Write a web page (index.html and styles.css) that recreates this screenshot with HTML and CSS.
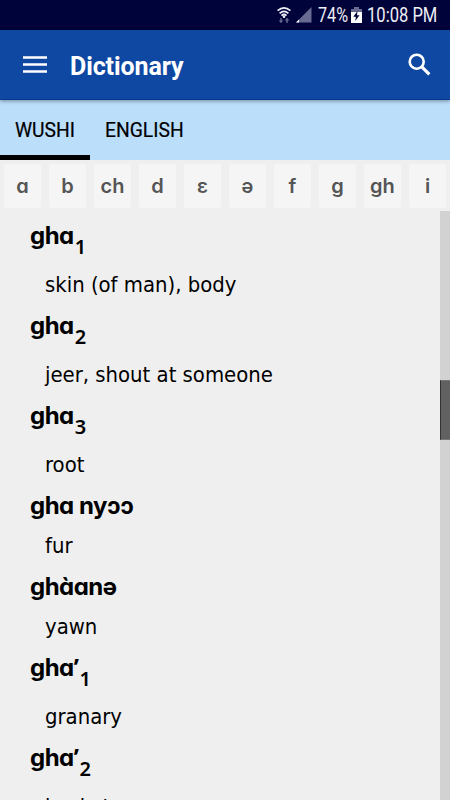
FILE: index.html
```html
<!DOCTYPE html>
<html lang="en">
  <head>
    <meta charset="UTF-8" />
    <meta name="viewport" content="width=device-width, initial-scale=1.0" />
    <title>Dictionary</title>
    <link rel="stylesheet" href="styles.css">
  </head>
  <body>
    <div class="status-bar">
      <svg class="wifi" width="14" height="17" viewBox="0 0 14 17">
        <g fill="none" stroke="#eeeef5" stroke-width="1.7">
          <path d="M.6 3.7Q7-1.8 13.4 3.7" />
          <path d="M2.6 6.3Q7 2.5 11.4 6.3" />
          <path d="M4.5 8.6Q7 6.4 9.5 8.6" />
        </g>
        <circle cx="7" cy="9.8" r="1.3" fill="#eeeef5" />
        <path d="M3.2 11h1.5v2.6h1.6L4 16.2 1.7 13.6h1.5zM9.3 16h1.5v-2.6h1.6L10 10.8 7.8 13.4h1.5z" fill="#65668c" />
      </svg>
      <svg class="signal" width="16" height="16" viewBox="0 0 16 16">
        <path d="M15.5 0v15.5H0z" fill="#696a91" />
        <path d="M3 12.5v3H0z" fill="#fff" />
      </svg>
      <span class="percent">74%</span>
      <svg class="battery" width="11" height="16" viewBox="0 0 11 16">
        <path d="M3 0h5v2h3v3H0V2h3z" fill="#696a91" />
        <path d="M0 5h11v11H0z" fill="#fff" />
        <path d="M6.5 4L2.3 9.8h2.6L4.2 14l4.3-5.8H6z" fill="#00023a" />
      </svg>
      <span class="clock">10:08 PM</span>
    </div>

    <header class="app-bar">
      <svg class="menu-icon" width="24" height="17" viewBox="0 0 24 17">
        <path d="M0 1.5h24M0 8.5h24M0 15.5h24" stroke="#fff" stroke-width="2.4" />
      </svg>
      <h1 class="title">Dictionary</h1>
      <svg class="search-icon" width="23" height="23" viewBox="0 0 23 23" fill="none" stroke="#fff">
        <circle cx="8.7" cy="8.7" r="7" stroke-width="2.6" />
        <path d="M13.8 13.8l7.5 7.5" stroke-width="3.2" />
      </svg>
    </header>

    <nav class="tabs">
      <div class="tab active">WUSHI</div>
      <div class="tab">ENGLISH</div>
    </nav>

    <div class="letters">
      <div class="letter">a</div>
      <div class="letter">b</div>
      <div class="letter">ch</div>
      <div class="letter">d</div>
      <div class="letter">ɛ</div>
      <div class="letter">ə</div>
      <div class="letter">f</div>
      <div class="letter">g</div>
      <div class="letter">gh</div>
      <div class="letter">i</div>
    </div>

    <main class="content">
      <div class="entries">
        <div class="word numbered">gha<span class="number">1</span></div>
        <div class="meaning">skin (of man), body</div>
        <div class="word numbered">gha<span class="number">2</span></div>
        <div class="meaning">jeer, shout at someone</div>
        <div class="word numbered">gha<span class="number">3</span></div>
        <div class="meaning">root</div>
        <div class="word">gha nyɔɔ</div>
        <div class="meaning">fur</div>
        <div class="word">ghàanə</div>
        <div class="meaning">yawn</div>
        <div class="word numbered">gha<span class="glottal">’</span><span class="number">1</span></div>
        <div class="meaning">granary</div>
        <div class="word numbered">gha<span class="glottal">’</span><span class="number">2</span></div>
        <div class="meaning">basket</div>
      </div>
      <div class="scrollbar">
        <div class="thumb"></div>
      </div>
    </main>
  </body>
</html>
```
FILE: styles.css
```css
* {
  box-sizing: border-box;
}

body {
  display: flex;
  flex-direction: column;
  height: 100vh;
  margin: 0;
  overflow: hidden;
  background-color: #efefef;
  color: black;
  font-family: Roboto, sans-serif;
}

svg {
  flex: none;
}

.status-bar {
  display: flex;
  flex: none;
  align-items: center;
  height: 30px;
  padding-left: 277px;
  background-color: #00023a;
  color: #eeeef5;
  font-size: 19.5px;
  line-height: 30px;
  white-space: nowrap;
}

.signal {
  margin-left: 5px;
}

.percent {
  width: 30px;
  margin: 2px 3px 0 6px;
  transform: scaleX(0.83);
  transform-origin: left;
}

.clock {
  margin: 2px 0 0 5px;
  transform: scaleX(0.85);
  transform-origin: left;
}

.app-bar {
  display: flex;
  flex: none;
  align-items: center;
  height: 70px;
  padding: 0 19px 0 23px;
  background-color: #0f48a2;
  border-bottom: 1px solid #083791;
  box-shadow: 0 1px 4px rgba(0, 0, 0, 0.4);
  z-index: 1;
}

.title {
  margin: 3px auto 0 23px;
  color: white;
  font-size: 25px;
  font-weight: bold;
  letter-spacing: -0.1px;
}

.tabs {
  display: flex;
  flex: none;
  height: 60px;
  background-color: #bbdefb;
}

.tab {
  height: 60px;
  padding: 0 15px;
  font-size: 19.3px;
  font-weight: 400;
  line-height: 62px;
  -webkit-text-stroke: 0.2px black;
}

.active {
  width: 90px;
  border-bottom: 5px solid black;
}

.letters {
  display: flex;
  flex: none;
  gap: 8px;
  height: 51px;
  padding: 4px;
}

.letter {
  width: 37px;
  height: 44px;
  border-radius: 2px;
  background-color: #f5f5f5;
  color: #555;
  font-family: Inter, "Noto Sans", sans-serif;
  font-feature-settings: "cv11";
  font-size: 20px;
  font-weight: 600;
  line-height: 44px;
  text-align: center;
}

.content {
  display: flex;
  flex: 1;
  min-height: 0;
}

.entries {
  flex: 1;
  padding: 5px 0 0 30px;
  overflow: hidden;
}

.word {
  height: 40px;
  font-family: Inter, "Noto Sans", sans-serif;
  font-feature-settings: "cv11";
  font-size: 24px;
  font-weight: 700;
  letter-spacing: -0.5px;
  line-height: 40px;
}

.numbered {
  height: 49px;
}

.glottal {
  font-family: "Noto Sans", sans-serif;
  line-height: 1;
}

.number {
  position: relative;
  top: 10px;
  left: 1px;
  font-family: "Noto Sans", sans-serif;
  font-size: 20px;
  font-weight: 600;
  line-height: 1;
}

.meaning {
  height: 41px;
  padding-left: 15px;
  font-family: "DejaVu Sans Condensed", "DejaVu Sans", sans-serif;
  font-size: 21.9px;
  font-stretch: condensed;
  line-height: 39px;
}

.scrollbar {
  width: 10px;
  padding-top: 169px;
  background-color: #d2d2d2;
}

.thumb {
  height: 60px;
  border: 1px solid #777;
  border-left-color: #333;
  border-right: 0;
  background-color: #616161;
}
```
